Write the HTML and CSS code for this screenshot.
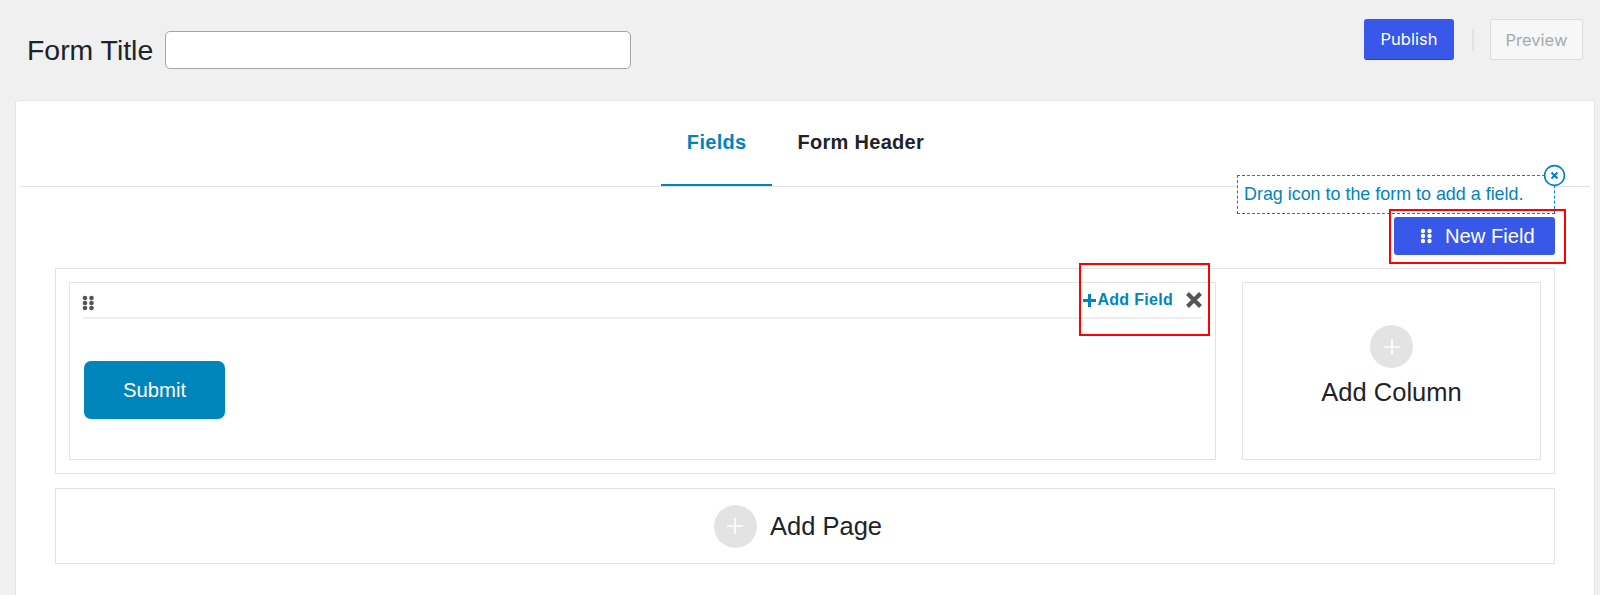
FILE: index.html
```html
<!DOCTYPE html>
<html lang="en">
<head>
    <meta charset="UTF-8">
    <meta name="viewport" content="width=device-width, initial-scale=1.0">
    <title>Form Builder</title>
    <link rel="stylesheet" href="styles.css">
</head>
<body>
    <header class="top-bar">
        <div class="title-group">
            <label class="title-label" for="form-title">Form Title</label>
            <input class="title-input" type="text" id="form-title">
        </div>
        <div class="actions">
            <button class="btn-publish" type="button">Publish</button>
            <span class="actions-sep"></span>
            <button class="btn-preview" type="button">Preview</button>
        </div>
    </header>

    <main class="card">
        <nav class="tabs">
            <a class="tab tab-active">Fields</a>
            <a class="tab">Form Header</a>
        </nav>

        <div class="tip">
            Drag icon to the form to add a field.
            <span class="tip-close">
                <svg width="23" height="23" viewBox="0 0 23 23">
                    <circle cx="11.5" cy="11.5" r="9.9" fill="#fff" stroke="#0085ba" stroke-width="1.6"/>
                    <path d="M8.5 8.5l6 6M14.5 8.5l-6 6" fill="none" stroke="#0085ba" stroke-width="2"/>
                </svg>
            </span>
        </div>

        <div class="builder">
            <div class="toolbar">
                <button class="btn-new-field" type="button">
                    <svg width="12" height="16" viewBox="0 0 12 16" fill="#fff">
                        <circle cx="3" cy="3" r="2.2"/><circle cx="9.5" cy="3" r="2.2"/>
                        <circle cx="3" cy="8" r="2.2"/><circle cx="9.5" cy="8" r="2.2"/>
                        <circle cx="3" cy="13" r="2.2"/><circle cx="9.5" cy="13" r="2.2"/>
                    </svg>
                    New Field
                </button>
                <span class="mark mark-new-field"></span>
            </div>

            <section class="row">
                <div class="column">
                    <div class="column-head">
                        <svg class="drag" width="12" height="16" viewBox="0 0 12 16" fill="#555">
                            <circle cx="3" cy="3" r="2.3"/><circle cx="9.5" cy="3" r="2.3"/>
                            <circle cx="3" cy="8" r="2.3"/><circle cx="9.5" cy="8" r="2.3"/>
                            <circle cx="3" cy="13" r="2.3"/><circle cx="9.5" cy="13" r="2.3"/>
                        </svg>
                        <a class="add-field">
                            <svg width="13" height="13" viewBox="0 0 13 13">
                                <path d="M6.5 0v13M0 6.5h13" stroke="#0085ba" stroke-width="3" fill="none"/>
                            </svg>
                            Add Field
                        </a>
                        <svg class="remove" width="18" height="18" viewBox="0 0 18 18">
                            <path d="M2.5 2.5l13 13M15.5 2.5l-13 13" stroke="#555" stroke-width="4.2" fill="none"/>
                        </svg>
                        <span class="mark mark-add-field"></span>
                    </div>
                    <button class="btn-submit" type="button">Submit</button>
                </div>
                <div class="add-column">
                    <span class="plus-circle">
                        <svg width="16" height="16" viewBox="0 0 16 16">
                            <path d="M8 0v16M0 8h16" stroke="#fff" stroke-width="1.6" fill="none"/>
                        </svg>
                    </span>
                    Add Column
                </div>
            </section>

            <section class="add-page">
                <span class="plus-circle">
                    <svg width="16" height="16" viewBox="0 0 16 16">
                        <path d="M8 0v16M0 8h16" stroke="#fff" stroke-width="1.6" fill="none"/>
                    </svg>
                </span>
                Add Page
            </section>
        </div>
    </main>
</body>
</html>
```

FILE: styles.css
```css
html, body {
    height: 595px;
    overflow: hidden;
}
body {
    margin: 0;
    background-color: #f0f0f0;
    font-family: "Liberation Sans", Arial, sans-serif;
    color: #1d2327;
}
button {
    cursor: pointer;
}

/* top bar */
.top-bar {
    display: flex;
    height: 100px;
    padding: 0 17px 0 27px;
    box-sizing: border-box;
}
.title-group {
    display: flex;
    align-items: center;
    gap: 12px;
}
.title-label {
    font-size: 28.4px;
}
.title-input {
    width: 466px;
    height: 38px;
    box-sizing: border-box;
    border: 1.5px solid #a5a5a5;
    border-radius: 5px;
    background-color: #fff;
}
.actions {
    display: flex;
    align-items: center;
    margin-left: auto;
    margin-top: 19px;
    height: 41px;
}
.btn-publish, .btn-preview {
    height: 41px;
    border-radius: 3px;
    font-family: Inter, sans-serif;
    font-size: 16.5px;
    font-weight: 400;
}
.btn-publish {
    width: 90px;
    border: none;
    border-bottom: 1px solid #1c43e6;
    background-color: #3858e9;
    color: #fff;
}
.actions-sep {
    width: 2px;
    height: 22px;
    margin: 0 16px 0 18px;
    background-color: #e2e2e2;
}
.btn-preview {
    width: 93px;
    border: 1.5px solid #dcdcde;
    background-color: #f6f7f7;
    color: #a7aaad;
}

/* card + tabs */
.card {
    position: relative;
    height: 540px;
    margin: 0 5px 0 15px;
    border: 1px solid #e4e4e4;
    border-radius: 3px;
    background-color: #fff;
}
.tabs {
    display: flex;
    justify-content: center;
    height: 85px;
    margin: 0 4px;
    border-bottom: 1px solid #e2e2e2;
}
.tab {
    display: flex;
    align-items: center;
    height: 85px;
    padding: 0 25px;
    box-sizing: border-box;
    border-bottom: 2px solid transparent;
    font-size: 20px;
    font-weight: bold;
    letter-spacing: 0.3px;
}
.tab-active {
    padding: 0 26px;
    border-bottom-color: #0085ba;
    color: #0085ba;
}

/* hint over the toolbar */
.tip {
    position: absolute;
    top: 74px;
    right: 39px;
    width: 318px;
    height: 39px;
    box-sizing: border-box;
    padding-left: 6px;
    border: 1px dashed #0085ba;
    background-color: #fff;
    color: #0085ba;
    font-size: 17.9px;
    line-height: 37px;
}
.tip-close {
    position: absolute;
    top: -12px;
    right: -12px;
    line-height: 0;
}

/* builder */
.builder {
    padding: 30px 39px 0;
}
.toolbar {
    position: relative;
    display: flex;
    justify-content: flex-end;
}
.btn-new-field {
    display: flex;
    align-items: center;
    gap: 13px;
    width: 161px;
    height: 38px;
    padding: 0 0 0 26px;
    border: none;
    border-radius: 3px;
    background-color: #3858e9;
    color: #fff;
    font-family: "Liberation Sans", Arial, sans-serif;
    font-size: 20.2px;
}
.mark {
    position: absolute;
    box-sizing: border-box;
    border: 2px solid #f00;
}
.mark-new-field {
    top: -8px;
    right: -11px;
    width: 177px;
    height: 55px;
}
.row {
    display: flex;
    gap: 26px;
    height: 206px;
    margin-top: 13px;
    padding: 13px;
    box-sizing: border-box;
    border: 1px solid #e2e2e2;
}
.column {
    flex: 1;
    padding: 0 13px;
    border: 1px solid #e2e2e2;
}
.column-head {
    position: relative;
    display: flex;
    align-items: center;
    height: 34px;
    border-bottom: 2px solid #eee;
}
.drag {
    margin: 5px 0 0 -1px;
}
.add-field {
    display: flex;
    align-items: center;
    gap: 1px;
    margin-left: auto;
    color: #0085ba;
    font-size: 16px;
    font-weight: bold;
    letter-spacing: 0.3px;
}
.remove {
    margin-left: 12px;
    margin-right: -1px;
}
.mark-add-field {
    top: -20px;
    right: -8px;
    width: 131px;
    height: 73px;
}
.btn-submit {
    display: block;
    width: 141px;
    height: 58px;
    margin: 42px 0 0 1px;
    border: none;
    border-radius: 7px;
    background-color: #0085ba;
    color: #fff;
    font-family: "Liberation Sans", Arial, sans-serif;
    font-size: 20.3px;
}
.add-column {
    display: flex;
    flex-direction: column;
    align-items: center;
    justify-content: center;
    gap: 10px;
    width: 299px;
    padding-bottom: 10px;
    box-sizing: border-box;
    border: 1px solid #e2e2e2;
    font-size: 25.5px;
}
.plus-circle {
    display: flex;
    align-items: center;
    justify-content: center;
    width: 43px;
    height: 43px;
    border-radius: 50%;
    background-color: #e3e3e3;
}
.add-page {
    display: flex;
    align-items: center;
    justify-content: center;
    gap: 13px;
    height: 76px;
    margin-top: 14px;
    padding-right: 14px;
    box-sizing: border-box;
    border: 1px solid #e2e2e2;
    font-size: 25.5px;
}
```
